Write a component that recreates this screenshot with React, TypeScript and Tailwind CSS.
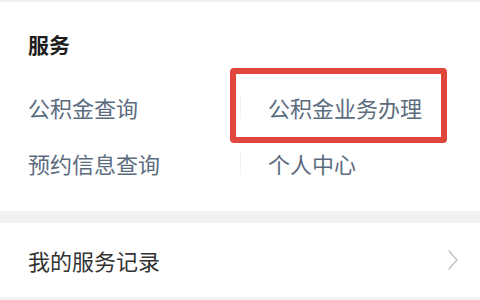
const CJK = { fontFamily: '"Noto Sans CJK SC", "Noto Sans", sans-serif' };

const ROWS = [
  ["公积金查询", "公积金业务办理"],
  ["预约信息查询", "个人中心"],
];

export default function App() {
  return (
    <div className="relative h-[300px] w-[480px] overflow-hidden bg-[#f2f2f2]" style={CJK}>
      <div className="mt-[2px] bg-white pb-[19px] pt-[26px]">
        <div className="h-[32px] pl-[28px] text-[21px] font-bold leading-[32px] text-[#1c1c1c]">服务</div>
        <div className="mt-[18px]">
          {ROWS.map(([left, right], i) => (
            <div key={left} className={`grid h-[58px] grid-cols-2 items-center ${i === 1 ? "-mt-[2px]" : ""}`}>
              <div className="pl-[28px] text-[22px] leading-[58px] text-[#5b6b7e]">{left}</div>
              <div className="flex items-center">
                <span className="h-[24px] w-px bg-[#f2f2f2]" />
                <span className="pl-[27px] text-[22px] leading-[58px] text-[#5b6b7e]">{right}</span>
              </div>
            </div>
          ))}
        </div>
      </div>

      <div className="mt-[12px] flex h-[74px] items-center justify-between bg-white pl-[28px] pr-[22px]">
        <span className="text-[22px] text-[#333333]">我的服务记录</span>
        <svg width="10" height="20" viewBox="0 0 10 20" fill="none">
          <polyline points="1,1 9,10 1,19" stroke="#c6c6c6" strokeWidth="1.6" strokeLinecap="round" strokeLinejoin="round" />
        </svg>
      </div>

      {/* annotation box */}
      <div className="absolute left-[230px] top-[68px] h-[75px] w-[217px] rounded-[4px] border-[6px] border-[#e0463c]" />
    </div>
  );
}
